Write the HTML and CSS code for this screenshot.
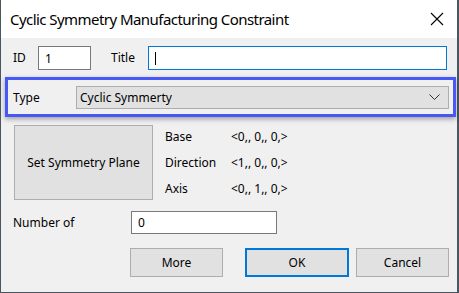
FILE: index.html
```html
<!DOCTYPE html>
<html lang="en">
<head>
  <meta charset="UTF-8" />
  <title>Cyclic Symmetry Manufacturing Constraint</title>
  <link rel="stylesheet" href="styles.css">
</head>
<body>
  <div class="dialog">
    <div class="titlebar">
      <span class="caption">Cyclic Symmetry Manufacturing Constraint</span>
      <svg class="close" width="14" height="14" viewBox="0 0 14 14">
        <path d="M1 1 L13 13 M13 1 L1 13" stroke="#000" stroke-width="1.1" fill="none" />
      </svg>
    </div>
    <div class="content">
      <div class="row id-row">
        <span class="label id-label">ID</span>
        <div class="field id-field">1</div>
        <span class="label title-label">Title</span>
        <div class="field title-field focused"><span class="caret"></span></div>
      </div>

      <div class="type-box">
        <span class="label type-label">Type</span>
        <div class="combo">
          <span>Cyclic Symmerty</span>
          <svg width="11" height="7" viewBox="0 0 11 7">
            <path d="M0.5 0.5 L5.5 5.5 L10.5 0.5" stroke="#333" stroke-width="1" fill="none" />
          </svg>
        </div>
      </div>

      <div class="plane-row">
        <div class="btn plane-btn">Set Symmetry Plane</div>
        <div class="vectors">
          <div class="vec"><span class="vec-name">Base</span><span>&lt;0,, 0,, 0,&gt;</span></div>
          <div class="vec"><span class="vec-name">Direction</span><span>&lt;1,, 0,, 0,&gt;</span></div>
          <div class="vec"><span class="vec-name">Axis</span><span>&lt;0,, 1,, 0,&gt;</span></div>
        </div>
      </div>

      <div class="row number-row">
        <span class="label number-label">Number of</span>
        <div class="field number-field">0</div>
      </div>

      <div class="buttons">
        <div class="btn more-btn">More</div>
        <div class="btn ok-btn">OK</div>
        <div class="btn cancel-btn">Cancel</div>
      </div>
    </div>
  </div>
</body>
</html>
```
FILE: styles.css
```css
body {
  margin: 0;
  background: #f0f0f0;
  font-family: "Noto Sans", "Open Sans", sans-serif;
  font-size: 12px;
  color: #000;
}
.dialog {
  width: 459px;
  height: 293px;
  box-sizing: border-box;
  border-left: 1px solid #4a5662;
  border-right: 2px solid #4a5662;
  border-bottom: 1px solid #4a5662;
  background: #f0f0f0;
  display: flex;
  flex-direction: column;
}
.titlebar {
  height: 38px;
  background: #fff;
  display: flex;
  align-items: center;
  justify-content: space-between;
  padding: 0 13px 0 9px;
  flex-shrink: 0;
}
.caption {
  font-size: 15px;
  letter-spacing: -0.55px;
  color: #000;
  margin-top: -1px;
}
.close {
  margin-top: -1px;
}
.content {
  flex: 1;
  padding-top: 8px;
}
.row {
  display: flex;
  align-items: center;
}
.label {
  line-height: 16px;
}
.field {
  height: 24px;
  box-sizing: border-box;
  background: #fff;
  border: 1px solid #7a7a7a;
  padding: 0 0 0 6px;
  display: flex;
  align-items: center;
}
.id-label {
  margin-left: 12px;
  width: 25px;
}
.id-field {
  width: 53px;
}
.title-label {
  margin-left: 20px;
  width: 37px;
}
.title-field {
  width: 299px;
}
.focused {
  border-color: #0078d7;
}
.caret {
  width: 1px;
  height: 13px;
  background: #000;
}
.type-box {
  margin: 7px 0 0 4px;
  width: 451px;
  height: 40px;
  box-sizing: border-box;
  border: 3px solid #4758f6;
  box-shadow: 0 2px 5px rgba(0, 0, 0, 0.35);
  display: flex;
  align-items: center;
  padding-top: 1px;
}
.type-label {
  margin-left: 5px;
  width: 63px;
}
.combo {
  width: 373px;
  height: 23px;
  box-sizing: border-box;
  background: #e1e1e1;
  border: 1px solid #adadad;
  display: flex;
  align-items: center;
  justify-content: space-between;
  padding: 0 8px 0 3px;
}
.btn {
  box-sizing: border-box;
  background: #e1e1e1;
  border: 1px solid #adadad;
  display: flex;
  align-items: center;
  justify-content: center;
}
.plane-row {
  display: flex;
  margin-top: 8px;
}
.plane-btn {
  margin-left: 13px;
  width: 139px;
  height: 75px;
}
.vectors {
  margin-left: 12px;
  margin-top: -2px;
}
.vec {
  display: flex;
  height: 26px;
  align-items: center;
}
.vec-name {
  width: 66px;
}
.number-row {
  margin-top: 10px;
}
.number-label {
  margin-left: 12px;
  width: 118px;
}
.number-field {
  width: 146px;
  height: 23px;
}
.buttons {
  display: flex;
  margin-top: 14px;
  margin-left: 129px;
}
.buttons .btn {
  height: 29px;
}
.more-btn {
  width: 93px;
}
.ok-btn {
  width: 104px;
  margin-left: 22px;
  border: 2px solid #0078d7;
}
.cancel-btn {
  width: 93px;
  margin-left: 7px;
}
```
